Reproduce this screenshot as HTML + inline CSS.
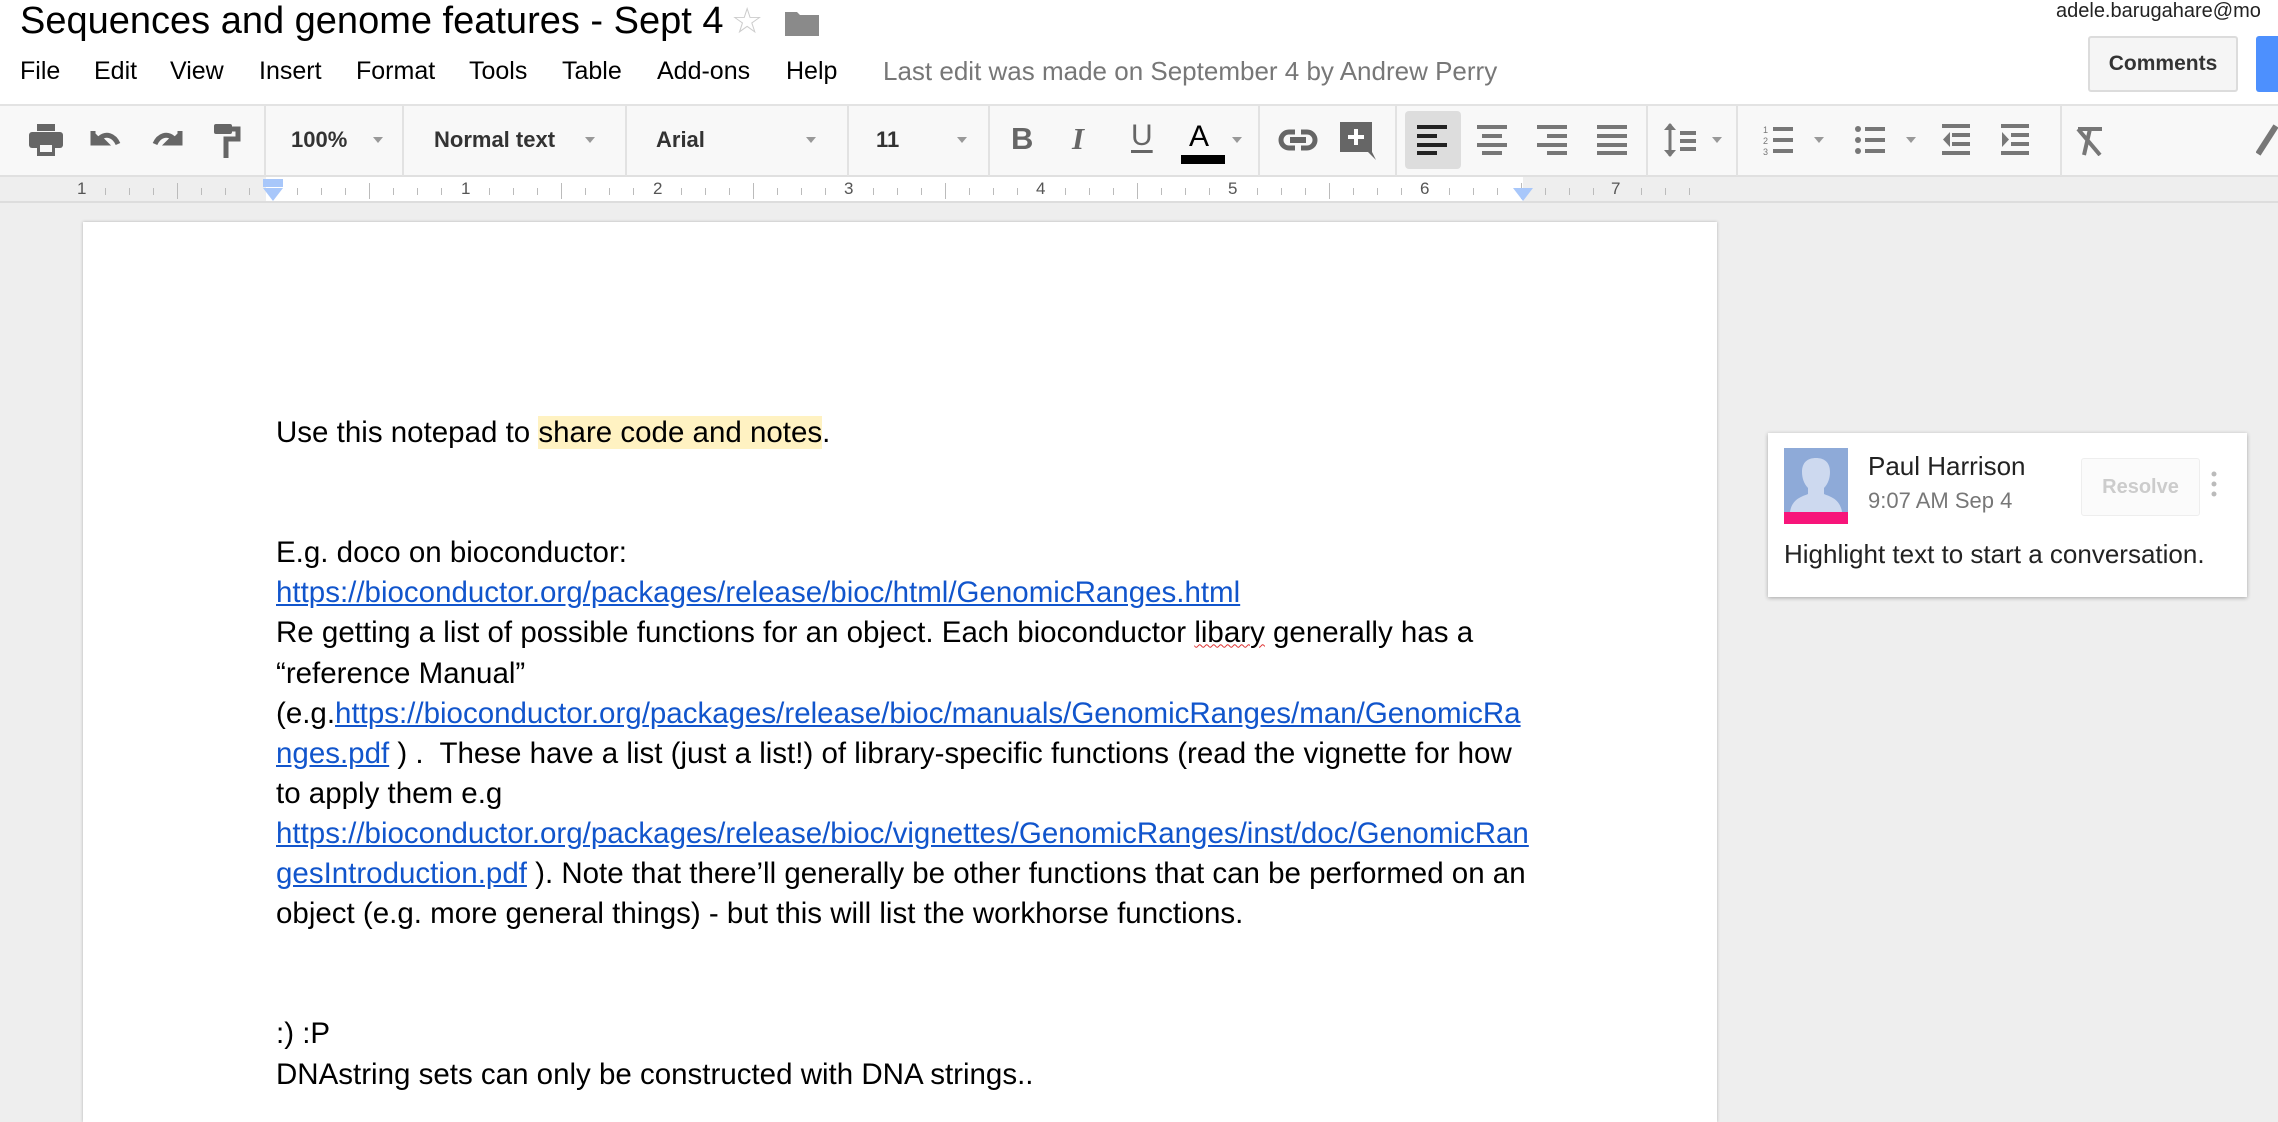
<!DOCTYPE html>
<html><head><meta charset="utf-8"><style>
*{margin:0;padding:0;box-sizing:border-box}
body{width:2278px;height:1086px;overflow:hidden;background:#eeeeee;font-family:"Liberation Sans",Arial,sans-serif;position:relative}
.abs{position:absolute;white-space:nowrap}
#top{position:absolute;left:0;top:0;width:2278px;height:105px;background:#fff}
#tb{position:absolute;left:0;top:104px;width:2278px;height:73px;background:#f8f8f8;border-top:2px solid #e3e3e3;border-bottom:2px solid #e0e0e0}
.sep{position:absolute;top:106px;width:2px;height:70px;background:#e2e2e2}
.tt{position:absolute;font-size:22px;font-weight:bold;color:#333;top:127px}
.dd{position:absolute;top:137px;width:0;height:0;border-left:5px solid transparent;border-right:5px solid transparent;border-top:6px solid #999}
#ruler{position:absolute;left:0;top:177px;width:2278px;height:26px;background:#eee;border-bottom:2px solid #ddd}
#rw{position:absolute;left:266px;top:177px;width:1257px;height:24px;background:#fff}
.rn{position:absolute;top:179px;font-size:17px;color:#555}
.tk{position:absolute;width:1px;background:#bbb}
#page{position:absolute;left:83px;top:222px;width:1634px;height:900px;background:#fff;box-shadow:0 0 3px rgba(0,0,0,.25)}
#txt{position:absolute;left:276px;top:413px;font-size:29.5px;line-height:40.1px;color:#000}
#txt div{height:40.1px;white-space:nowrap}
a{color:#1155cc;text-decoration:underline}
.hl{background:#fff2c2}
.sq{text-decoration:underline wavy #d33;text-decoration-thickness:1px}
svg{position:absolute}
.m{position:absolute;white-space:nowrap;top:57px;font-size:25px;color:#000}
</style></head><body>
<div id="top"></div>
<div class="abs" style="left:20px;top:0px;font-size:38px;color:#000">Sequences and genome features - Sept 4</div>
<div class="abs" style="left:731px;top:0px;font-size:36px;color:#ccc">☆</div>
<svg style="left:785px;top:10px" width="34" height="26" viewBox="0 0 34 26"><path d="M0 2 h12 l3 3 h19 v21 h-34z" fill="#8a8a8a"/></svg>
<div class="abs" style="left:2056px;top:0px;font-size:20px;color:#222">adele.barugahare@mo</div>
<div class="m" style="left:20px">File</div>
<div class="m" style="left:94px">Edit</div>
<div class="m" style="left:170px">View</div>
<div class="m" style="left:259px">Insert</div>
<div class="m" style="left:356px">Format</div>
<div class="m" style="left:469px">Tools</div>
<div class="m" style="left:562px">Table</div>
<div class="m" style="left:657px">Add-ons</div>
<div class="m" style="left:786px">Help</div>
<div class="m" style="left:883px;color:#777;font-size:26px;top:56px">Last edit was made on September 4 by Andrew Perry</div>
<div class="abs" style="left:2088px;top:36px;width:150px;height:56px;background:#f5f5f5;border:2px solid #dcdcdc;border-radius:3px;font-size:21px;font-weight:bold;color:#333;text-align:center;line-height:52px">Comments</div>
<div class="abs" style="left:2256px;top:36px;width:40px;height:56px;background:#4d90fe;border-radius:3px"></div>

<div id="tb"></div>
<div class="sep" style="left:264px"></div><div class="sep" style="left:402px"></div><div class="sep" style="left:625px"></div><div class="sep" style="left:847px"></div><div class="sep" style="left:988px"></div><div class="sep" style="left:1258px"></div><div class="sep" style="left:1395px"></div><div class="sep" style="left:1646px"></div><div class="sep" style="left:1736px"></div><div class="sep" style="left:2060px"></div>
<svg style="left:29px;top:124px" width="34" height="32" viewBox="0 0 34 32"><rect x="8" y="0" width="18" height="7" fill="#666"/><rect x="0" y="8" width="34" height="16" rx="3" fill="#666"/><rect x="8" y="18" width="18" height="14" fill="#666"/><rect x="11" y="21" width="12" height="7" fill="#f8f8f8"/></svg>
<svg style="left:89px;top:127px" width="34" height="24" viewBox="0 0 34 24"><path d="M4 4 v12 h12 l-5-5 c6-5 14-3 18 6" stroke="#666" stroke-width="5" fill="none"/><path d="M4 4 v12 h12z" fill="#666"/></svg>
<svg style="left:150px;top:127px" width="34" height="24" viewBox="0 0 34 24"><path d="M30 4 v12 h-12 l5-5 c-6-5 -14-3 -18 6" stroke="#666" stroke-width="5" fill="none"/><path d="M30 4 v12 h-12z" fill="#666"/></svg>
<svg style="left:214px;top:124px" width="28" height="34" viewBox="0 0 28 34"><rect x="0" y="0" width="18" height="10" rx="2" fill="#666"/><path d="M18 5 h6 v10 h-12 v19" stroke="#666" stroke-width="5" fill="none"/></svg>
<div class="tt" style="left:291px">100%</div><div class="dd" style="left:373px"></div>
<div class="tt" style="left:434px">Normal text</div><div class="dd" style="left:585px"></div>
<div class="tt" style="left:656px">Arial</div><div class="dd" style="left:806px"></div>
<div class="tt" style="left:876px">11</div><div class="dd" style="left:957px"></div>
<div class="abs" style="left:1011px;top:121px;font-size:31px;font-weight:bold;color:#666">B</div>
<div class="abs" style="left:1072px;top:121px;font-size:31px;font-weight:bold;font-style:italic;color:#666;font-family:'Liberation Serif',serif">I</div>
<div class="abs" style="left:1131px;top:119px;font-size:30px;color:#666;text-decoration:underline;text-decoration-thickness:3px;text-underline-offset:5px">U</div>
<div class="abs" style="left:1189px;top:120px;font-size:30px;color:#000">A</div>
<div class="abs" style="left:1181px;top:155px;width:44px;height:9px;background:#000"></div>
<div class="dd" style="left:1232px"></div>
<svg style="left:1278px;top:129px" width="40" height="22" viewBox="0 0 40 22"><rect x="3" y="3" width="34" height="16" rx="8" stroke="#666" stroke-width="5" fill="none"/><rect x="12" y="8" width="16" height="6" fill="#666"/><rect x="17" y="0" width="6" height="6" fill="#f8f8f8"/><rect x="17" y="16" width="6" height="6" fill="#f8f8f8"/></svg>
<svg style="left:1340px;top:122px" width="36" height="38" viewBox="0 0 36 38"><path d="M0 0 h32 v30 l4 8 l-8-8 h-28z" fill="#666"/><path d="M16 7 v16 M8 15 h16" stroke="#fff" stroke-width="4"/></svg>
<div class="abs" style="left:1405px;top:111px;width:56px;height:58px;background:#ddd;border-radius:4px"></div>
<svg style="left:1417px;top:125px" width="32" height="30" viewBox="0 0 32 30"><g fill="#222"><rect x="0" y="0" width="30" height="4"/><rect x="0" y="9" width="20" height="4"/><rect x="0" y="18" width="30" height="4"/><rect x="0" y="26" width="20" height="4"/></g></svg>
<svg style="left:1477px;top:125px" width="32" height="30" viewBox="0 0 32 30"><g fill="#777"><rect x="0" y="0" width="30" height="4"/><rect x="5" y="9" width="20" height="4"/><rect x="0" y="18" width="30" height="4"/><rect x="5" y="26" width="20" height="4"/></g></svg>
<svg style="left:1537px;top:125px" width="32" height="30" viewBox="0 0 32 30"><g fill="#777"><rect x="0" y="0" width="30" height="4"/><rect x="10" y="9" width="20" height="4"/><rect x="0" y="18" width="30" height="4"/><rect x="10" y="26" width="20" height="4"/></g></svg>
<svg style="left:1597px;top:125px" width="32" height="30" viewBox="0 0 32 30"><g fill="#777"><rect x="0" y="0" width="30" height="4"/><rect x="0" y="9" width="30" height="4"/><rect x="0" y="18" width="30" height="4"/><rect x="0" y="26" width="30" height="4"/></g></svg>
<svg style="left:1664px;top:122px" width="36" height="36" viewBox="0 0 36 36"><path d="M6 2 v32" stroke="#777" stroke-width="3"/><path d="M0 8 l6-7 6 7z M0 28 l6 7 6-7z" fill="#777"/><g fill="#777"><rect x="16" y="9" width="16" height="4"/><rect x="16" y="17" width="16" height="4"/><rect x="16" y="25" width="16" height="4"/></g></svg>
<div class="dd" style="left:1712px"></div>
<svg style="left:1763px;top:124px" width="32" height="32" viewBox="0 0 32 32"><g fill="#777"><rect x="10" y="3" width="20" height="4"/><rect x="10" y="14" width="20" height="4"/><rect x="10" y="25" width="20" height="4"/></g><text x="0" y="9" font-size="9" fill="#777" font-family="Liberation Sans">1</text><text x="0" y="20" font-size="9" fill="#777" font-family="Liberation Sans">2</text><text x="0" y="31" font-size="9" fill="#777" font-family="Liberation Sans">3</text></svg>
<div class="dd" style="left:1814px"></div>
<svg style="left:1855px;top:124px" width="32" height="32" viewBox="0 0 32 32"><g fill="#777"><circle cx="3" cy="5" r="3"/><circle cx="3" cy="16" r="3"/><circle cx="3" cy="27" r="3"/><rect x="10" y="3" width="20" height="4"/><rect x="10" y="14" width="20" height="4"/><rect x="10" y="25" width="20" height="4"/></g></svg>
<div class="dd" style="left:1906px"></div>
<svg style="left:1942px;top:124px" width="30" height="32" viewBox="0 0 30 32"><g fill="#777"><rect x="0" y="0" width="28" height="4"/><rect x="10" y="9" width="18" height="4"/><rect x="10" y="18" width="18" height="4"/><rect x="0" y="27" width="28" height="4"/><path d="M8 8 v15 l-7-7.5z"/></g></svg>
<svg style="left:2001px;top:124px" width="30" height="32" viewBox="0 0 30 32"><g fill="#777"><rect x="0" y="0" width="28" height="4"/><rect x="10" y="9" width="18" height="4"/><rect x="10" y="18" width="18" height="4"/><rect x="0" y="27" width="28" height="4"/><path d="M1 8 v15 l7-7.5z"/></g></svg>
<svg style="left:2076px;top:126px" width="28" height="30" viewBox="0 0 28 30"><path d="M2 3 h24 M14 3 l-6 26 M2 3 l22 26" stroke="#777" stroke-width="4" fill="none"/></svg>
<svg style="left:2256px;top:122px" width="22" height="34" viewBox="0 0 22 34"><path d="M2 32 l18-28" stroke="#777" stroke-width="6"/></svg>

<div id="ruler"></div><div id="rw"></div>
<div id="ticks"></div>
<div class="rn" style="left:77px">1</div><div class="rn" style="left:461px">1</div><div class="rn" style="left:653px">2</div><div class="rn" style="left:844px">3</div><div class="rn" style="left:1036px">4</div><div class="rn" style="left:1228px">5</div><div class="rn" style="left:1420px">6</div><div class="rn" style="left:1611px">7</div>
<div class="abs" style="left:263px;top:179px;width:20px;height:8px;background:#a8c7fa"></div>
<svg style="left:263px;top:188px" width="20" height="14"><path d="M0 0 h20 l-10 13z" fill="#a8c7fa"/></svg>
<svg style="left:1513px;top:188px" width="20" height="14"><path d="M0 0 h20 l-10 13z" fill="#a8c7fa"/></svg>
<script>
var h='';for(var i=0;i<68;i++){var x=81+i*24;if(i%8==0)continue;var long=i%4==0;h+='<div class="tk" style="left:'+x+'px;top:'+(long?183:188)+'px;height:'+(long?16:7)+'px"></div>';}
document.getElementById('ticks').innerHTML=h;
</script>

<div id="page"></div>
<div id="txt">
<div>Use this notepad to <span class="hl">share code and notes</span>.</div>
<div></div><div></div>
<div>E.g. doco on bioconductor:</div>
<div><a>https://bioconductor.org/packages/release/bioc/html/GenomicRanges.html</a></div>
<div>Re getting a list of possible functions for an object. Each bioconductor <span class="sq">libary</span> generally has a</div>
<div>“reference Manual”</div>
<div>(e.g.<a>https://bioconductor.org/packages/release/bioc/manuals/GenomicRanges/man/GenomicRa</a></div>
<div><a>nges.pdf</a> ) .&nbsp; These have a list (just a list!) of library-specific functions (read the vignette for how</div>
<div>to apply them e.g</div>
<div><a>https://bioconductor.org/packages/release/bioc/vignettes/GenomicRanges/inst/doc/GenomicRan</a></div>
<div><a>gesIntroduction.pdf</a> ). Note that there’ll generally be other functions that can be performed on an</div>
<div>object (e.g. more general things) - but this will list the workhorse functions.</div>
<div></div><div></div>
<div>:) :P</div>
<div>DNAstring sets can only be constructed with DNA strings..</div>
</div>

<div class="abs" style="left:1768px;top:433px;width:479px;height:164px;background:#fff;box-shadow:0 1px 4px rgba(0,0,0,.3)"></div>
<svg style="left:1784px;top:448px" width="64" height="76" viewBox="0 0 64 76"><rect width="64" height="64" fill="#8eaad8"/><path d="M6 64 c2-14 14-16 18-18 v-6 c-4-4-6-10-6-16 c0-10 6-14 14-14 s14 4 14 14 c0 6-2 12-6 16 v6 c4 2 16 4 18 18z" fill="#cdd9ef"/><rect y="64" width="64" height="12" fill="#f7157a"/></svg>
<div class="abs" style="left:1868px;top:451px;font-size:26px;color:#222">Paul Harrison</div>
<div class="abs" style="left:1868px;top:488px;font-size:22px;color:#777">9:07 AM Sep 4</div>
<div class="abs" style="left:2081px;top:458px;width:119px;height:58px;border:1px solid #eee;border-radius:3px;background:#fbfbfb;font-size:20px;font-weight:bold;color:#ccc;text-align:center;line-height:56px">Resolve</div>
<svg style="left:2210px;top:470px" width="8" height="30"><circle cx="4" cy="4" r="2.5" fill="#bbb"/><circle cx="4" cy="14" r="2.5" fill="#bbb"/><circle cx="4" cy="24" r="2.5" fill="#bbb"/></svg>
<div class="abs" style="left:1784px;top:539px;font-size:26px;color:#222">Highlight text to start a conversation.</div>
</body></html>
